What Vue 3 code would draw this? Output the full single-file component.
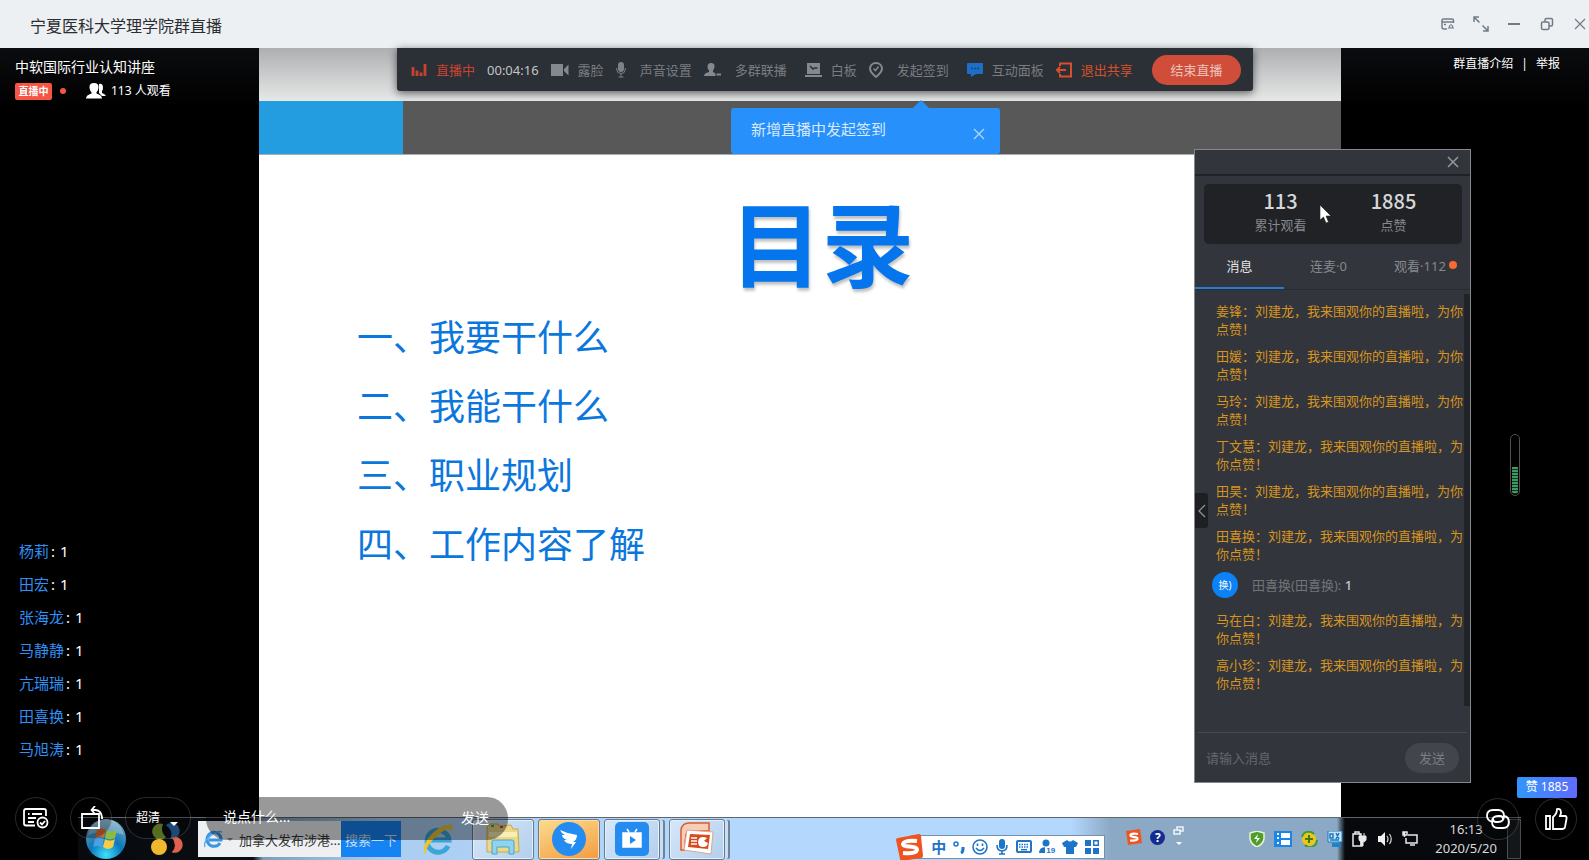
<script setup>
import { ref } from 'vue'

const comments = ['杨莉', '田宏', '张海龙', '马静静', '亢瑞瑞', '田喜换', '马旭涛']
const outline = ['一、我要干什么', '二、我能干什么', '三、职业规划', '四、工作内容了解']
const messages = [
    { name: '姜锋' },
    { name: '田媛' },
    { name: '马玲' },
    { name: '丁文慧' },
    { name: '田昊' },
    { name: '田喜换' },
    { name: '田喜换(田喜换)', text: '1' },
    { name: '马在白' },
    { name: '高小珍' }
]
const tabs = [
    { key: 'msg', label: '消息' },
    { key: 'link', label: '连麦·0' },
    { key: 'view', label: '观看·112', dot: true }
]
const activeTab = ref('msg')
const showTip = ref(true)
const draft = ref('')
const panelDraft = ref('')
const likes = ref(1885)
</script>
<template>
    <div class="window">
        <header class="titlebar">
            <h1>宁夏医科大学理学院群直播</h1>
            <div class="win-btns">
                <button aria-label="小窗">
                    <svg width="14" height="14" viewBox="0 0 14 14"><path d="M6 12H3Q1 12 1 10V3.500Q1 2 2.500 2H11Q12.500 2 12.500 3.500V6M1 5H12.500M3 7.500H5" /><path d="M7 11H13M8.500 11V9Q10 6.500 11.500 9V11" stroke-width="1.200" /></svg>
                </button>
                <button aria-label="全屏">
                    <svg width="18" height="18" viewBox="0 0 18 18"><path d="M2 7V2H7M2 2L7.500 7.500M16 11V16H11M16 16L10.500 10.500" /></svg>
                </button>
                <button aria-label="最小化">
                    <svg width="14" height="14" viewBox="0 0 14 14"><path d="M1 7H13" stroke-width="2" /></svg>
                </button>
                <button aria-label="还原">
                    <svg width="14" height="14" viewBox="0 0 14 14"><rect x="1.500" y="5" width="7.500" height="7.500" rx="1.500" /><path d="M5 5V3Q5 1.500 6.500 1.500H11Q12.500 1.500 12.500 3V7.500Q12.500 9 11 9H9" /></svg>
                </button>
                <button aria-label="关闭">
                    <svg width="14" height="14" viewBox="0 0 14 14"><path d="M2 2L12 12M12 2L2 12" stroke-width="1.200" /></svg>
                </button>
            </div>
        </header>

        <main class="stage">
            <!-- shared desktop -->
            <section class="desktop">
                <div class="slide">
                    <div class="slide-top"></div>
                    <div class="slide-band"><i></i></div>
                    <div class="slide-body">
                        <h2>目录</h2>
                        <ul>
                            <li v-for="item in outline" :key="item">{{ item }}</li>
                        </ul>
                    </div>

                    <div class="toolbar">
                        <span class="tool live">
                            <svg width="16" height="16" viewBox="0 0 16 16"><path d="M2 5V14M6 8.500V14M10 10.500V14M14 2V14" stroke="#c8432f" stroke-width="2.800" /></svg>直播中
                        </span>
                        <time class="timer">00:04:16</time>
                        <button class="tool">
                            <svg width="18" height="16" viewBox="0 0 18 16"><path d="M0 2H12V14H0ZM13 7L17.500 2.500V13.500L13 9Z" fill="#85888c" /></svg>露脸
                        </button>
                        <button class="tool wide">
                            <svg width="10" height="16" viewBox="0 0 10 16"><rect x="2" y="0" width="6" height="10" rx="3" fill="#7d8085" /><path d="M.8 6V8Q1 11.500 5 11.500T9.200 8V6M5 11.500V15M2.500 15H7.500" fill="none" stroke="#7d8085" /></svg>声音设置
                        </button>
                        <button class="tool wide">
                            <svg width="17" height="16" viewBox="0 0 17 16"><path d="M7 1Q11 1 10.500 5Q10 7.500 9 8.500V10Q11 10.500 11.500 12V14H0Q0 11 5 10V8.500Q3.500 7 3.500 5Q3.500 1 7 1ZM12.500 11.500H17V13.500H12.500Z" fill="#85888c" /></svg>多群联播
                        </button>
                        <button class="tool gap">
                            <svg width="17" height="16" viewBox="0 0 17 16"><path d="M2 1H15V12H2ZM0 13H17V15H0Z" fill="#85888c" /><path d="M5 4L8 7L9.500 6H12.500" fill="none" stroke="#2b2f36" stroke-width="1.500" /></svg>白板
                        </button>
                        <button class="tool wide">
                            <svg width="14" height="16" viewBox="0 0 14 16"><path d="M7 1C3.500 1 1 3.500 1 6.500C1 10 7 15 7 15S13 10 13 6.500C13 3.500 10.500 1 7 1Z" fill="none" stroke="#85888c" stroke-width="2" /><path d="M4.500 6.500L6.500 8.500L9.500 4.500" fill="none" stroke="#85888c" stroke-width="1.500" /></svg>发起签到
                        </button>
                        <button class="tool gap">
                            <svg width="16" height="16" viewBox="0 0 16 16"><path d="M1 1H15Q16 1 16 2V11Q16 12 15 12H9L4 15V12H1Q0 12 0 11V2Q0 1 1 1Z" fill="#1c6fc4" /><path d="M4 6.500H12" stroke="#17477a" stroke-width="1.500" stroke-dasharray="2 1" /></svg>互动面板
                        </button>
                        <button class="tool exit">
                            <svg width="16" height="16" viewBox="0 0 16 16"><path d="M4 4V1.500H15V14.500H4V12M10 8H1M4 5L1 8L4 11" fill="none" stroke="#d8502b" stroke-width="2" /></svg>退出共享
                        </button>
                        <button class="stop">结束直播</button>
                    </div>

                    <div class="tip" v-if="showTip">
                        新增直播中发起签到
                        <button aria-label="关闭提示" @click="showTip = false">
                            <svg width="12" height="12" viewBox="0 0 12 12"><path d="M1 1L11 11M11 1L1 11" stroke="#b4d6fa" stroke-width="1.200" /></svg>
                        </button>
                    </div>
                </div>

                <div class="taskbar">
                    <svg class="orb" width="42" height="42" viewBox="0 0 42 42">
                        <defs>
                            <radialGradient id="orb" cx=".5" cy=".9" r=".9"><stop offset="0" stop-color="#3fe0fb" /><stop offset=".45" stop-color="#0a78bc" /><stop offset="1" stop-color="#79a5bd" /></radialGradient>
                        </defs>
                        <circle cx="21" cy="21" r="20" fill="url(#orb)" />
                        <path d="M3 17Q7 2 21 1Q35 2 39 17Q21 10 3 17Z" fill="#fff" opacity=".25" />
                        <path d="M12 12Q17 9 21 12L19 20Q14 18 10 20Z" fill="#d4642c" />
                        <path d="M22 12Q27 15 32 12L30 20Q25 23 20 20Z" fill="#8cbc3f" />
                        <path d="M10 21Q14 19 19 21L17 29Q12 27 8 29Z" fill="#4d9fe0" />
                        <path d="M20 21Q25 24 30 21L28 29Q23 33 18 29Z" fill="#f6cc49" />
                    </svg>
                    <svg class="clover" width="34" height="34" viewBox="0 0 34 34">
                        <path d="M13 2A8 8 0 1 0 16 15Q10 10 13 2Z" fill="#7a9c2c" />
                        <path d="M17 2A8 8 0 1 1 19 16Q24 9 17 2Z" fill="#2c68a8" transform="rotate(-10 24 9)" />
                        <path d="M32 18A8 8 0 1 1 18 23Q26 27 32 18Z" fill="#e2604e" transform="rotate(-70 25 24)" />
                        <circle cx="9" cy="25" r="8" fill="#f0b92d" />
                    </svg>
                    <div class="search">
                        <svg width="20" height="20" viewBox="0 0 20 20"><path d="M16 14A7 7 0 1 1 17 11H5" fill="none" stroke="#3b95e4" stroke-width="3" /><path d="M1 18C-2 12 12 0 18 3" fill="none" stroke="#5aaef0" stroke-width="1.500" /></svg>
                        <i></i>
                        <span>加拿大发布涉港...</span>
                        <button>搜索一下</button>
                    </div>
                    <svg class="ie" width="34" height="34" viewBox="0 0 34 34"><path d="M27 24A11 11 0 1 1 28 18H8" fill="none" stroke="#3ba6d8" stroke-width="5" /><path d="M5 32C-4 26 16 0 31 3C33 5 31 8 30 9C29 0 3 22 5 32Z" fill="#efc233" /></svg>
                    <button class="task" aria-label="资源管理器">
                        <svg width="34" height="34" viewBox="0 0 34 34"><path d="M1 5L4 2H12L14 4L25 3L27 7H32L33 30H1Z" fill="#ecd88a" stroke="#c8a94a" /><path d="M3 10H31V15H3Z" fill="#f9eeb6" /><path d="M6 32V20Q6 18 8 18H26Q28 18 28 20V32H23V25H11V32Z" fill="#8fd3ef" stroke="#4aa4cc" /><path d="M5 4H8" stroke="#36a34b" stroke-width="2" /><path d="M14 5H17" stroke="#c8452e" stroke-width="2" /></svg>
                    </button>
                    <button class="task active" aria-label="钉钉">
                        <svg width="34" height="34" viewBox="0 0 34 34"><circle cx="17" cy="17" r="17" fill="#248cf0" /><path d="M8 8Q16 12 25 13Q25 18 21 20H24L19 27L20 22Q14 22 12 18H15Q10 16 10 13H13Q9 11 8 8Z" fill="#fff" /></svg>
                    </button>
                    <button class="task stacked" aria-label="直播">
                        <svg width="34" height="34" viewBox="0 0 34 34"><rect width="34" height="34" rx="5" fill="#248cf0" /><path d="M8 11H26V25H8ZM12 7L14 10M22 7L20 10" fill="#fff" stroke="#fff" stroke-width="1.500" /><path d="M15 14V22L21 18Z" fill="#248cf0" /></svg>
                    </button>
                    <button class="task stacked" aria-label="演示文稿">
                        <svg width="36" height="34" viewBox="0 0 36 34"><path d="M2 28V8Q3 1 10 1H30V9H9Q6 10 6 28Z" fill="#f7cdb8" stroke="#dc5b31" stroke-width="1.500" /><path d="M8 8L34 10L32 32L5 28Z" fill="#fff" stroke="#dca78f" /><path d="M11 12L31 13L29 27L9 25Z" fill="#d84a1f" /><path d="M12 16H18M12 19H18M12 22H18" stroke="#fff" stroke-width="1.500" /><path d="M24 15A5 5 0 1 0 29 21L25 19L28 16Q26 15 24 15Z" fill="#fff" /></svg>
                    </button>

                    <div class="ime">
                        <svg class="ime-logo" width="28" height="28" viewBox="0 0 28 28"><path d="M2 5L23 1Q25 1 25 3L27 23Q27 25 25 25L6 28Q4 28 4 26L0 7Q0 5 2 5Z" fill="#ef5420" /><path d="M21 8Q8 7 7 11C7 15 21 12 21 17Q20 21 7 20" fill="none" stroke="#fff" stroke-width="4" /></svg>
                        <b>中</b>
                        <svg width="12" height="16" viewBox="0 0 12 16"><circle cx="3" cy="5" r="2" fill="none" stroke="#1d74c8" stroke-width="1.500" /><path d="M10 8V10Q10 13 8 14" fill="none" stroke="#1d74c8" stroke-width="3" /></svg>
                        <svg width="16" height="16" viewBox="0 0 16 16" fill="none" stroke="#1d74c8" stroke-width="1.600"><circle cx="8" cy="8" r="7" /><path d="M5.500 4.500V7M10.500 4.500V7M4 9Q8 14 12 9" /></svg>
                        <svg width="14" height="16" viewBox="0 0 14 16"><rect x="4" y="0" width="6" height="10" rx="3" fill="#1d74c8" /><path d="M2 6Q2 12 7 12T12 6M7 12V15.500M4 15H10" fill="none" stroke="#1d74c8" stroke-width="1.600" /></svg>
                        <svg width="16" height="14" viewBox="0 0 16 14"><rect x="1" y="1" width="14" height="11" rx="1" fill="none" stroke="#1d74c8" stroke-width="2" /><path d="M3 4.500H13M3 7H13" stroke="#1d74c8" stroke-width="1.500" stroke-dasharray="1.500 1" /><path d="M5 9.700H11" stroke="#1d74c8" stroke-width="1.500" /></svg>
                        <span class="ime-user">
                            <svg width="16" height="16" viewBox="0 0 16 16" fill="#1d74c8"><circle cx="7" cy="4" r="3.500" /><path d="M0 14Q0 8 7 8T14 14Z" /></svg>
                            <em>19</em>
                        </span>
                        <svg width="16" height="14" viewBox="0 0 16 14"><path d="M5 0Q8 3 11 0L16 3L14 7H12V14H4V7H2L0 3Z" fill="#1d74c8" /></svg>
                        <svg width="14" height="14" viewBox="0 0 14 14" fill="#1d74c8"><path d="M0 0H6V6H0ZM0 8H6V14H0ZM8 8H14V14H8Z" /><path d="M8.700 .7H13.300V5.300H8.700Z" fill="none" stroke="#1d74c8" stroke-width="1.400" /></svg>
                    </div>

                    <div class="tray-left">
                        <svg width="16" height="16" viewBox="0 0 16 16"><path d="M0 2L14 0L16 14L2 16Z" fill="#ef5420" /><path d="M12 5Q4 4 4.500 6.500C5 9 12 7 11.500 10Q11 12 4 11.500" fill="none" stroke="#fff" stroke-width="2.200" /></svg>
                        <span class="help">?</span>
                        <svg width="12" height="24" viewBox="0 0 12 24"><path d="M1 5H7V9H1ZM4 5V2H10V6H7" fill="none" stroke="#eef4fa" stroke-width="1.500" /><path d="M3 17H9L6 20Z" fill="#fff" /></svg>
                    </div>
                    <div class="tray">
                        <svg width="16" height="16" viewBox="0 0 16 16"><path d="M8 0L15 2V8Q14 13 8 16Q2 13 1 8V2Z" fill="#4f9e2d" stroke="#e9f1d4" stroke-width="1.500" /><path d="M9 3L5 8H8L7 12L11 7H8Z" fill="#fff" /></svg>
                        <svg width="18" height="16" viewBox="0 0 18 16"><rect width="18" height="16" fill="#1b86ea" /><path d="M7 2H16V7H7ZM7 9H16V14H7Z" fill="#fff" /><path d="M3 3H5M3 7H5M3 12H5" stroke="#fff" stroke-width="2" /></svg>
                        <svg width="17" height="16" viewBox="0 0 17 16"><circle cx="8" cy="8" r="7" fill="#f2c515" /><path d="M1 6A7 7 0 0 1 13 3M16 9A7 7 0 0 1 4 14" fill="none" stroke="#3b9c3c" stroke-width="2" /><path d="M8 4V12M4 8H12" stroke="#337d25" stroke-width="2" /></svg>
                        <svg width="16" height="16" viewBox="0 0 16 16"><path d="M1 0H15V11H1Z" fill="#c9e4f8" stroke="#1979c0" /><path d="M3 3H6V7H3ZM9 2L12 8M12 2L9 8M3 9H12" fill="none" stroke="#1979c0" stroke-width="1.500" /><path d="M5 12H14V16H5Z" fill="#1d83cf" /></svg>
                        <svg width="16" height="16" viewBox="0 0 16 16"><path d="M1 3H9V15H1ZM3 1H7V3H3Z" fill="none" stroke="#e9e9e9" stroke-width="1.500" /><path d="M7 5H14V9Q13 11 11 11V15H9V11Q7 10 7 8ZM8 2V5M12 2V5" fill="#e9e9e9" stroke="#e9e9e9" /></svg>
                        <svg width="16" height="16" viewBox="0 0 16 16"><path d="M1 5H4L8 1V15L4 11H1Z" fill="#f0f0f0" /><path d="M10 5Q12 8 10 11M12.500 3Q16 8 12.500 13" fill="none" stroke="#c9c9c9" stroke-width="1.300" /></svg>
                        <svg width="16" height="16" viewBox="0 0 16 16"><path d="M6 4H15V12H4V7M8 14H13M2.500 1V6M1 1H5V4H1Z" fill="none" stroke="#e9e9e9" stroke-width="1.500" /></svg>
                    </div>
                    <div class="clock"><span>16:13</span><span>2020/5/20</span></div>
                    <i class="show-desktop"></i>
                </div>
            </section>

            <aside class="panel">
                <div class="panel-head">
                    <button aria-label="关闭面板">
                        <svg width="12" height="12" viewBox="0 0 12 12"><path d="M1 1L11 11M11 1L1 11" stroke="#95989c" stroke-width="1.500" /></svg>
                    </button>
                </div>
                <div class="stats">
                    <div><strong>113</strong><span>累计观看</span></div>
                    <div><strong>{{ likes }}</strong><span>点赞</span></div>
                </div>
                <nav class="tabs">
                    <button v-for="tab in tabs" :key="tab.key" :class="{ 'active': tab.key == activeTab, 'dotted': tab.dot }" @click="activeTab = tab.key">
                        {{ tab.label }}<i v-if="tab.dot"></i>
                    </button>
                </nav>
                <ul class="messages">
                    <li v-for="msg, index in messages" :key="index" :class="{ 'chat': msg.text }">
                        <template v-if="msg.text">
                            <span class="avatar">换)</span>
                            <span>{{ msg.name }}: <b>{{ msg.text }}</b></span>
                        </template>
                        <template v-else>{{ msg.name }}：刘建龙，我来围观你的直播啦，为你点赞！</template>
                    </li>
                </ul>
                <form class="panel-form" @submit.prevent="panelDraft = ''">
                    <input v-model="panelDraft" aria-label="消息" placeholder="请输入消息">
                    <button>发送</button>
                </form>
                <button class="fold" aria-label="收起">
                    <svg width="8" height="14" viewBox="0 0 8 14"><path d="M7 1L1 7L7 13" fill="none" stroke="#8d9094" stroke-width="1.300" /></svg>
                </button>
                <svg class="pointer" width="14" height="20" viewBox="0 0 14 20"><path d="M1 1V16L4.500 13L7 19L9.500 18L7 12H12Z" fill="#fff" stroke="#222" stroke-width=".6" /></svg>
            </aside>

            <!-- player overlay -->
            <div class="info">
                <p>中软国际行业认知讲座</p>
                <div class="info-row">
                    <span class="tag">直播中</span>
                    <i></i>
                    <svg width="20" height="16" viewBox="0 0 20 16" fill="#fff"><path d="M13 1Q17 0 17 5Q17 7 16 8V10Q19 11 20 13H16L13 10Z" /><path d="M8 0Q13 0 12.500 5Q12 8 10.500 9V10.500Q16 12 16 15.500H0Q0 12 5.500 10.500V9Q4 8 3.500 5Q3 0 8 0Z" /></svg>
                    <span>113 人观看</span>
                </div>
            </div>
            <div class="links">
                <a href="#">群直播介绍</a>
                <span>|</span>
                <a href="#">举报</a>
            </div>
            <ul class="comments">
                <li v-for="name in comments" :key="name"><span>{{ name }}</span>:<b>1</b></li>
            </ul>
            <div class="volume"><i></i></div>
            <div class="controls">
                <button class="round" aria-label="签到">
                    <svg width="26" height="22" viewBox="0 0 26 22"><path d="M12 18.500H3Q1 18.500 1 16.500V4Q1 2 3 2H21Q23 2 23 4V9M5 7H6.500M9 7H19M5 11H13M5 15H11" /><circle cx="19.500" cy="15.500" r="5" /><path d="M17 15.500L19 17.500L22 14" /></svg>
                </button>
                <button class="round" aria-label="旋转">
                    <svg width="26" height="24" viewBox="0 0 26 24"><path d="M4 8H21V22H4ZM14 4H17Q23 4 24 11V13M17 0L13.500 4L17 8" /></svg>
                </button>
                <button class="quality">超清<i></i></button>
                <form class="say" @submit.prevent="draft = ''">
                    <input v-model="draft" aria-label="评论" placeholder="说点什么...">
                    <button>发送</button>
                </form>
            </div>
            <div class="actions">
                <button class="round" aria-label="分享链接">
                    <svg width="24" height="20" viewBox="0 0 24 20"><path d="M6 13H6Q1 11 1 7Q1 1 7 1H12Q18 1 18 7T12 13H10Q7 13 7 10M18 7Q23 8 23 13Q23 19 17 19H12Q6 19 6 13T12 7H14Q17 7 17 10" /></svg>
                </button>
                <button class="round" aria-label="点赞" @click="likes++">
                    <svg width="24" height="24" viewBox="0 0 24 24"><path d="M2 9H6V22H2ZM9 10Q13 7 13 2Q17 1 17 6L16 9H21Q23 9 22.500 12L21 20Q20.500 22 18 22H9Z" /></svg>
                </button>
                <span class="like-count">赞 {{ likes }}</span>
            </div>
        </main>
    </div>
</template>
<style>
body{
    margin: 0;
    background-color: #000;
}
</style>
<style scoped>
.window{
    min-height: 100vh;
    display: flex;
    flex-direction: column;
    font-family: "Noto Sans", "Noto Sans CJK SC", sans-serif;
    overflow: hidden;
}
.window *{
    box-sizing: border-box;
}
h1, h2, p, ul{
    margin: 0;
    padding: 0;
    list-style: none;
    font-weight: normal;
}
button, input{
    font-family: inherit;
    font-size: inherit;
    color: inherit;
    background: none;
    border: none;
    padding: 0;
    margin: 0;
    outline: none;
    white-space: nowrap;
}
svg{
    display: block;
    flex-shrink: 0;
}
.titlebar{
    height: 48px;
    background-color: #ecf0f3;
    display: flex;
    align-items: center;
    justify-content: space-between;
    padding-left: 30px;
}
.titlebar h1{
    font-size: 16px;
    line-height: 24px;
    color: #2b2d30;
    padding-top: 3px;
}
.win-btns{
    display: flex;
}
.win-btns button{
    width: 33px;
    height: 32px;
    display: flex;
    align-items: center;
    justify-content: center;
}
.win-btns button:last-child{
    width: 26px;
    margin-right: -4px;
    margin-left: 4px;
}
.win-btns svg{
    fill: none;
    stroke: #717b86;
    stroke-width: 1.5;
}
.stage{
    flex: 1;
    position: relative;
    display: flex;
    background: linear-gradient(#0b0c0f, #000 60px);
}
.desktop{
    flex: 1;
    display: flex;
    flex-direction: column;
    margin: 0 68px 0 78px;
}
.slide{
    flex: 1;
    position: relative;
    display: flex;
    flex-direction: column;
    margin: 0 180px 0 181px;
    background-color: #fff;
}
.slide-top{
    height: 53px;
    background: linear-gradient(#aeafb1, #e6e7e7);
}
.slide-band{
    height: 54px;
    background-color: #585858;
    border-bottom: 1px solid #a5adb3;
}
.slide-band i{
    display: block;
    width: 144px;
    height: 53px;
    background-color: #249de0;
}
.slide-body{
    padding: 42px 0 0 98px;
}
.slide-body h2{
    font-size: 92px;
    line-height: 96px;
    font-weight: bold;
    color: #0575ee;
    text-align: center;
    padding-right: 54px;
    text-shadow: 1px 3px 3px rgba(0, 0, 0, 0.25);
}
.slide-body li{
    font-size: 36px;
    line-height: 69px;
    color: #0b77dd;
}
.slide-body ul{
    padding-top: 10px;
}
.toolbar{
    position: absolute;
    top: 0;
    left: 138px;
    right: 88px;
    height: 43px;
    padding: 0 12px 0 14px;
    display: flex;
    align-items: center;
    gap: 12px;
    background-color: #2b2f36;
    border-radius: 0 0 3px 3px;
    box-shadow: 0 2px 8px rgba(0, 0, 0, 0.6);
    font-size: 13px;
    color: #797c80;
}
.tool{
    display: flex;
    align-items: center;
    gap: 9px;
}
.tool.wide{
    gap: 14px;
}
.tool.gap{
    margin-left: 6px;
}
.tool.live{
    color: #c8432f;
}
.tool.exit{
    color: #d8502b;
}
.timer{
    color: #c3c5c8;
}
.stop{
    width: 89px;
    height: 30px;
    margin-left: auto;
    border-radius: 15px;
    background-color: #cf4d39;
    color: #ecc4bc;
}
.tip{
    position: absolute;
    top: 60px;
    left: 472px;
    width: 269px;
    height: 46px;
    padding: 0 15px 6px 20px;
    display: flex;
    align-items: center;
    justify-content: space-between;
    background-color: #2790fb;
    border-radius: 3px;
    color: #d9eafd;
    font-size: 15px;
}
.tip::before{
    content: "";
    position: absolute;
    left: 182px;
    top: -8px;
    border: 8px solid transparent;
    border-top: 0;
    border-bottom-color: #2790fb;
}
.tip button{
    padding-top: 12px;
}
.taskbar{
    height: 43px;
    border-top: 1px solid #5f666d;
    display: flex;
    align-items: center;
    background: linear-gradient(90deg, #070a0e 0, #0a0d12 175px, #7f9db9 185px, #aacdf0 300px, #b3d7fd 600px, #b3d7fd calc(100% - 450px), #8ba8c4 calc(100% - 410px), #8ba8c4 calc(100% - 184px), #07090c calc(100% - 176px));
}
.orb{
    margin-left: 7px;
}
.clover{
    margin-left: 23px;
}
.search{
    width: 203px;
    height: 36px;
    margin-left: 14px;
    background-color: #eef0f2;
    display: flex;
    align-items: center;
    font-size: 13px;
    color: #333;
    padding-left: 6px;
    white-space: nowrap;
}
.search i{
    border: 3px solid transparent;
    border-top-color: #8a8a8a;
    margin: 3px 6px 0 3px;
}
.search button{
    width: 60px;
    height: 36px;
    margin-left: auto;
    background-color: #1683f3;
    color: #c5dcf5;
}
.search span{
    width: 102px;
    overflow: hidden;
}
.ie{
    margin: 0 17px 0 20px;
}
.task{
    width: 62px;
    height: 41px;
    display: flex;
    align-items: center;
    justify-content: center;
    margin-right: 4px;
    border: 1px solid #66798d;
    border-radius: 3px;
    background: linear-gradient(135deg, #d6e7f8, #b3cfed);
    box-shadow: inset 0 0 0 1px #e4f0fc;
}
.task.active{
    background: linear-gradient(160deg, #fbdc8c, #f39b42);
    box-shadow: inset 0 0 0 1px #ffdca0;
}
.task.stacked{
    width: 56px;
    margin-right: 9px;
    box-shadow: inset 0 0 0 1px #e4f0fc, 4px 0 0 -1px #c8def5, 6px 0 0 -1px #6f8296;
}
.ime{
    height: 24px;
    margin: 16px 21px 0 auto;
    padding: 0 5px 0 0;
    display: flex;
    align-items: center;
    gap: 7px;
    background: linear-gradient(90deg, transparent 16px, #fff 16px);
    border: solid #7390ac;
    border-width: 1px 1px 1px 0;
    border-image: linear-gradient(90deg, transparent 16px, #7390ac 16px) 1;
    color: #1d74c8;
    font-size: 15px;
}
.ime b{
    line-height: 20px;
}
.ime-user{
    position: relative;
}
.ime-user em{
    position: absolute;
    left: 6px;
    top: 8px;
    padding: 0 1px;
    background-color: #fff;
    font: bold 8px/8px "Liberation Sans", sans-serif;
}
.tray-left{
    display: flex;
    align-items: center;
    gap: 8px;
    margin: 0 64px 4px 0;
}
.help{
    width: 15px;
    height: 15px;
    border-radius: 50%;
    background-color: #142b92;
    color: #fff;
    font-size: 12px;
    line-height: 15px;
    font-weight: bold;
    text-align: center;
}
.tray{
    display: flex;
    align-items: center;
    gap: 9px;
}
.clock{
    display: flex;
    flex-direction: column;
    align-items: center;
    font-size: 13px;
    line-height: 19px;
    color: #d8dadc;
    margin: 0 10px 0 17px;
}
.show-desktop{
    width: 14px;
    height: 40px;
    border: 1px solid #4a4d50;
    background-color: #14171a;
}
.panel{
    position: absolute;
    top: 101px;
    right: 118px;
    bottom: 77px;
    width: 277px;
    display: flex;
    flex-direction: column;
    background-color: #32353c;
    border: 1px solid #85878a;
    font-size: 13px;
    color: #85888d;
}
.panel-head{
    height: 26px;
    border-bottom: 2px solid #202226;
    display: flex;
    align-items: center;
    justify-content: flex-end;
    padding-right: 11px;
}
.stats{
    margin: 8px 8px 0 9px;
    height: 60px;
    border-radius: 5px;
    background-color: #202226;
    display: flex;
    justify-content: space-around;
    padding: 3px 12px 0 20px;
}
.stats div{
    width: 90px;
    display: flex;
    flex-direction: column;
    align-items: center;
}
.stats strong{
    font: 500 20px/28px "Noto Sans CJK SC", sans-serif;
    color: #d5d7d9;
}
.stats span{
    line-height: 20px;
}
.tabs{
    display: flex;
    height: 46px;
    border-bottom: 1px solid #282b30;
}
.tabs button{
    flex: 1;
    border-bottom: 2px solid transparent;
}
.tabs .dotted{
    padding-left: 8px;
}
.tabs .active{
    color: #e2e4e6;
    border-bottom-color: #2a7bd9;
}
.tabs i{
    display: inline-block;
    width: 8px;
    height: 8px;
    margin-left: 3px;
    border-radius: 50%;
    background-color: #fb6932;
    vertical-align: 2px;
}
.messages{
    flex: 1;
    overflow: hidden;
    margin: 4px 0 0;
    padding: 8px 8px 0 21px;
    background: linear-gradient(#202327, #202327) right 0 top / 6px 412px no-repeat;
}
.messages li{
    line-height: 18px;
    margin-bottom: 9px;
    margin-right: -8px;
    padding-right: 7px;
    color: #d6941f;
}
.messages li.chat{
    display: flex;
    align-items: center;
    gap: 14px;
    margin: 0 0 13px -4px;
    color: #717479;
}
.messages b{
    color: #c5c7ca;
    font-weight: 500;
}
.avatar{
    width: 26px;
    height: 26px;
    border-radius: 50%;
    background-color: #0b82f5;
    color: #fff;
    font-size: 10px;
    line-height: 26px;
    text-align: center;
}
.panel-form{
    height: 50px;
    margin: 0 3px;
    padding: 0 8px;
    border-top: 1px solid #474a50;
    display: flex;
    align-items: center;
    justify-content: space-between;
}
.panel-form input{
    width: 150px;
}
.panel-form input::placeholder{
    color: #64676c;
    opacity: 1;
}
.panel-form button{
    width: 54px;
    height: 30px;
    border-radius: 15px;
    background-color: #42454b;
    color: #7b7e83;
}
.fold{
    position: absolute;
    left: 0;
    top: 343px;
    width: 13px;
    height: 35px;
    border-radius: 0 3px 3px 0;
    background-color: #1d1f23;
    display: flex;
    align-items: center;
    justify-content: center;
}
.pointer{
    position: absolute;
    left: 124px;
    top: 54px;
}
.info{
    position: absolute;
    left: 15px;
    top: 9px;
    color: #fff;
}
.info p{
    font-size: 14px;
    line-height: 20px;
}
.info-row{
    display: flex;
    align-items: center;
    margin-top: 4px;
    font-size: 12px;
    line-height: 20px;
}
.info-row i{
    width: 6px;
    height: 6px;
    border-radius: 50%;
    background-color: #f65444;
    margin: 0 20px 0 8px;
}
.info-row svg{
    margin-right: 5px;
}
.tag{
    width: 37px;
    height: 17px;
    border-radius: 2px;
    background-color: #f65444;
    font-size: 10px;
    line-height: 16px;
    font-weight: bold;
    text-align: center;
}
.links{
    position: absolute;
    right: 29px;
    top: 6px;
    display: flex;
    gap: 8px;
    font-size: 12px;
    line-height: 20px;
    color: #fff;
}
.links a{
    color: #fff;
    text-decoration: none;
}
.comments{
    position: absolute;
    left: 19px;
    bottom: 94px;
    font-size: 15px;
    line-height: 33px;
    color: #fff;
}
.comments span{
    color: #2f90f5;
    margin-right: 2px;
}
.comments b{
    font-weight: normal;
    margin-left: 5px;
}
.volume{
    position: absolute;
    right: 69px;
    bottom: 364px;
    width: 10px;
    height: 62px;
    padding: 1px;
    border: 1px solid #4d5350;
    border-radius: 5px;
    display: flex;
    align-items: flex-end;
}
.volume i{
    width: 6px;
    height: 27px;
    border-radius: 0 0 3px 3px;
    background: repeating-linear-gradient(#3d9a63 0 2px, #12301f 2px 3px);
}
.controls{
    position: absolute;
    left: 15px;
    bottom: 20px;
    display: flex;
    color: #fff;
}
.round{
    width: 42px;
    height: 42px;
    border-radius: 50%;
    border: 1px solid rgba(255, 255, 255, 0.16);
    background-color: rgba(0, 0, 0, 0.3);
    display: flex;
    align-items: center;
    justify-content: center;
}
.round svg{
    fill: none;
    stroke: #fff;
    stroke-width: 1.8;
}
.controls .round{
    margin-right: 13px;
}
.quality{
    width: 66px;
    height: 42px;
    border-radius: 21px;
    border: 1px solid rgba(255, 255, 255, 0.16);
    background-color: rgba(0, 0, 0, 0.3);
    display: flex;
    align-items: center;
    justify-content: space-between;
    padding: 0 12px 2px 10px;
    font-size: 12px;
}
.quality i{
    border: 4px solid transparent;
    border-top-color: #fff;
    margin-top: 17px;
}
.say{
    width: 302px;
    height: 43px;
    border-radius: 21px;
    margin-left: 15px;
    padding: 0 19px 4px 17px;
    background-color: rgba(0, 0, 0, 0.4);
    display: flex;
    align-items: center;
    justify-content: space-between;
    font-size: 14px;
}
.say input{
    width: 200px;
}
.say input::placeholder{
    color: #fff;
    opacity: 1;
}
.actions{
    position: absolute;
    right: 12px;
    bottom: 20px;
    display: flex;
    gap: 16px;
    color: #fff;
}
.like-count{
    position: absolute;
    right: 0;
    bottom: 42px;
    width: 60px;
    height: 21px;
    border-radius: 2px;
    background: linear-gradient(90deg, #3296fa, #5f6bff);
    font-size: 12px;
    line-height: 20px;
    text-align: center;
}
</style>
